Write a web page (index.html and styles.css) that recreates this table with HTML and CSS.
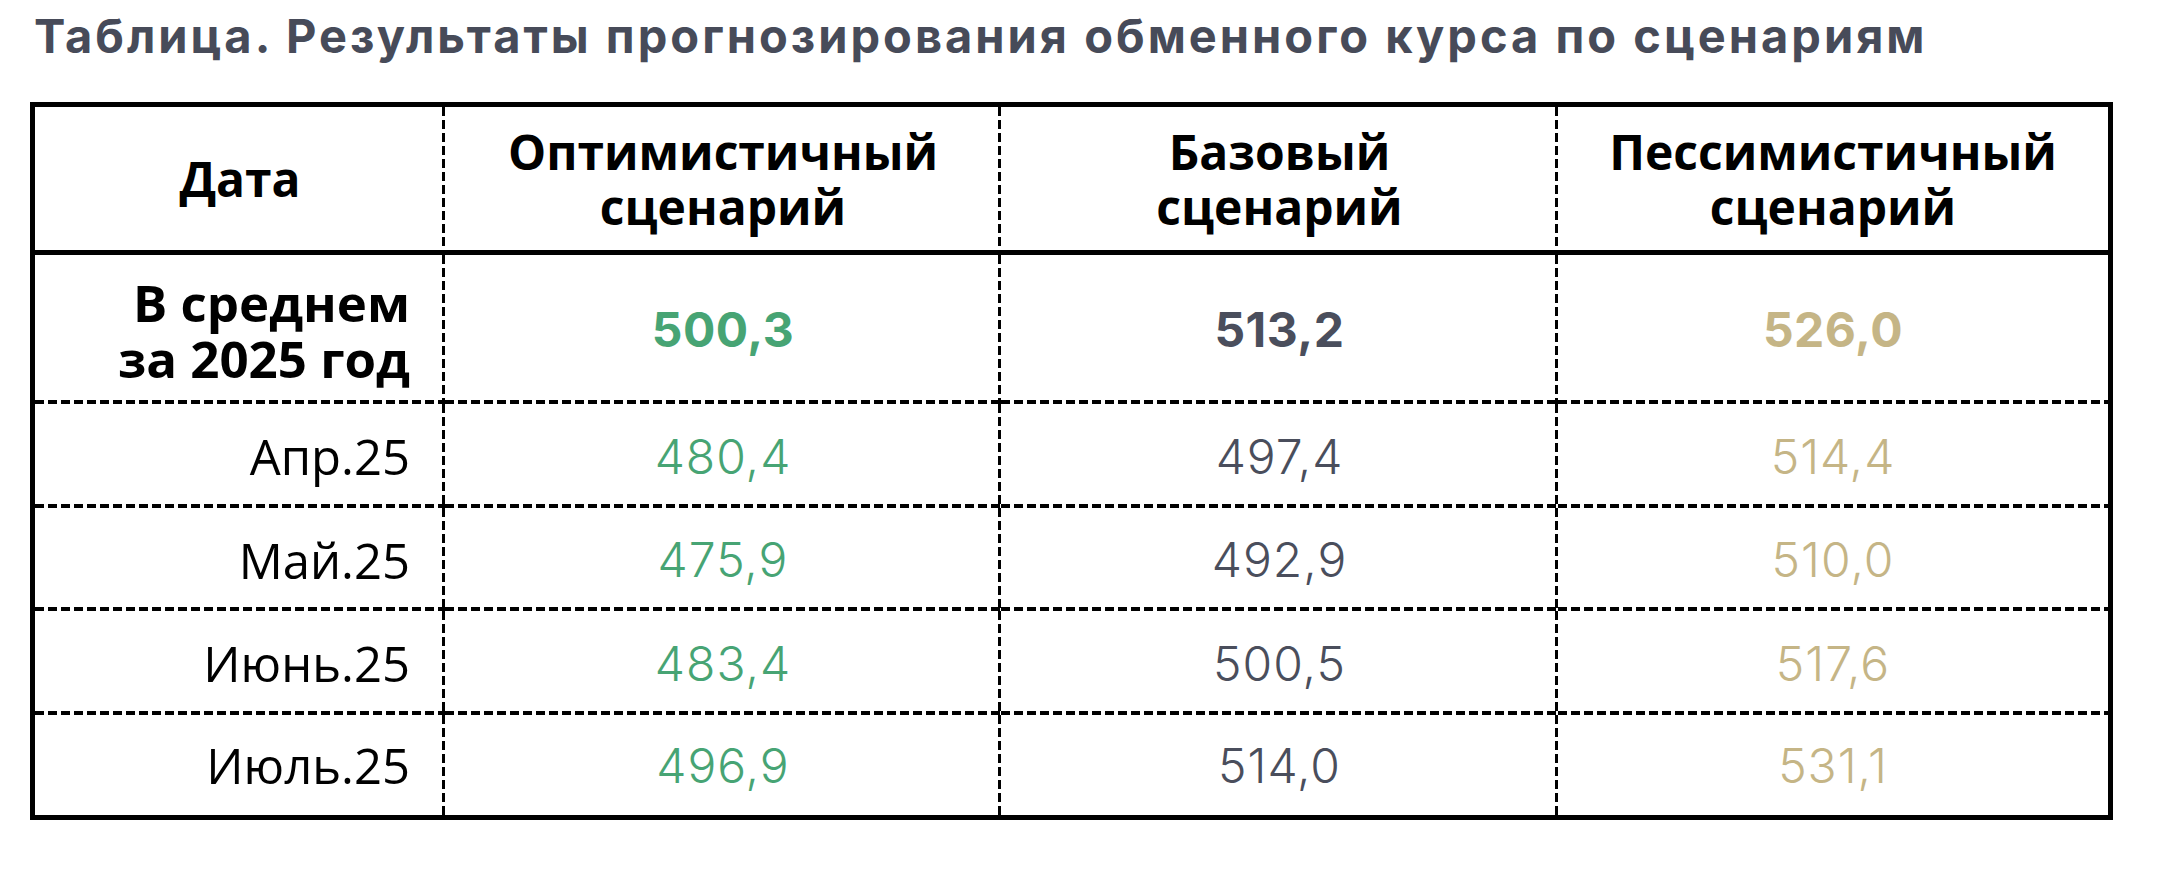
FILE: index.html
```html
<!DOCTYPE html>
<html lang="ru">
<head>
<meta charset="utf-8">
<title>Таблица</title>
<link rel="stylesheet" href="styles.css">
</head>
<body>
<div class="page">
  <h1 class="title">Таблица. Результаты прогнозирования обменного курса по сценариям</h1>
  <div class="grid">
    <div class="cell head vr">Дата</div>
    <div class="cell head vr">Оптимистичный<br>сценарий</div>
    <div class="cell head vr">Базовый<br>сценарий</div>
    <div class="cell head">Пессимистичный<br>сценарий</div>

    <div class="cell label strong vr hr">В среднем<br>за 2025 год</div>
    <div class="cell num bold green vr hr">500,3</div>
    <div class="cell num bold gray vr hr">513,2</div>
    <div class="cell num bold gold hr">526,0</div>

    <div class="cell label vr hr">Апр.25</div>
    <div class="cell num green vr hr">480,4</div>
    <div class="cell num gray vr hr">497,4</div>
    <div class="cell num gold hr">514,4</div>

    <div class="cell label vr hr">Май.25</div>
    <div class="cell num green vr hr">475,9</div>
    <div class="cell num gray vr hr">492,9</div>
    <div class="cell num gold hr">510,0</div>

    <div class="cell label vr hr">Июнь.25</div>
    <div class="cell num green vr hr">483,4</div>
    <div class="cell num gray vr hr">500,5</div>
    <div class="cell num gold hr">517,6</div>

    <div class="cell label vr">Июль.25</div>
    <div class="cell num green vr">496,9</div>
    <div class="cell num gray vr">514,0</div>
    <div class="cell num gold">531,1</div>
  </div>
</div>
</body>
</html>
```
FILE: styles.css
```css
html, body {
  margin: 0;
  padding: 0;
  background: #ffffff;
}

.page {
  padding: 9px 0 0 30px;
}

.title {
  margin: 0 0 39px 4px;
  font-family: "Inter", "Noto Sans", sans-serif;
  font-weight: 700;
  font-size: 47px;
  line-height: 54px;
  letter-spacing: 3px;
  color: #474b59;
  white-space: nowrap;
}

.grid {
  display: grid;
  grid-template-columns: 410px 556px 557px 550px;
  grid-template-rows: 148px 149px 104px 103px 104px 100px;
  width: 2073px;
  border: 5px solid #000;
}

.cell {
  box-sizing: border-box;
  display: flex;
  align-items: center;
  justify-content: center;
  text-align: center;
  background-repeat: no-repeat;
}

.head {
  border-bottom: 5px solid #000;
  font-family: "Open Sans", "Noto Sans", sans-serif;
  font-weight: 700;
  font-size: 48px;
  line-height: 55px;
  color: #000;
}

.vr {
  background-image: repeating-linear-gradient(to bottom, #000 0 9px, transparent 9px 13px);
  background-position: right top;
  background-size: 3px 100%;
}

.hr {
  background-image: repeating-linear-gradient(to right, #000 0 9px, transparent 9px 13px);
  background-position: left bottom;
  background-size: 100% 4px;
}

.vr.hr {
  background-image:
    repeating-linear-gradient(to bottom, #000 0 9px, transparent 9px 13px),
    repeating-linear-gradient(to right, #000 0 9px, transparent 9px 13px);
  background-position: right top, left bottom;
  background-size: 3px 100%, 100% 4px;
}

.label {
  justify-content: flex-end;
  text-align: right;
  padding-right: 35px;
  font-family: "Open Sans", "Noto Sans", sans-serif;
  font-weight: 400;
  font-size: 49px;
  line-height: 58px;
  color: #000;
}

.label.strong {
  font-weight: 700;
  font-size: 51px;
  line-height: 56px;
}

.num {
  font-family: "Inter", "Noto Sans", sans-serif;
  font-weight: 300;
  font-size: 48px;
  letter-spacing: 1px;
}

.num.bold {
  font-weight: 700;
  letter-spacing: 0.5px;
}

.green { color: #47a474; }
.gray { color: #4a4e5c; }
.gold { color: #c5b586; }
```
